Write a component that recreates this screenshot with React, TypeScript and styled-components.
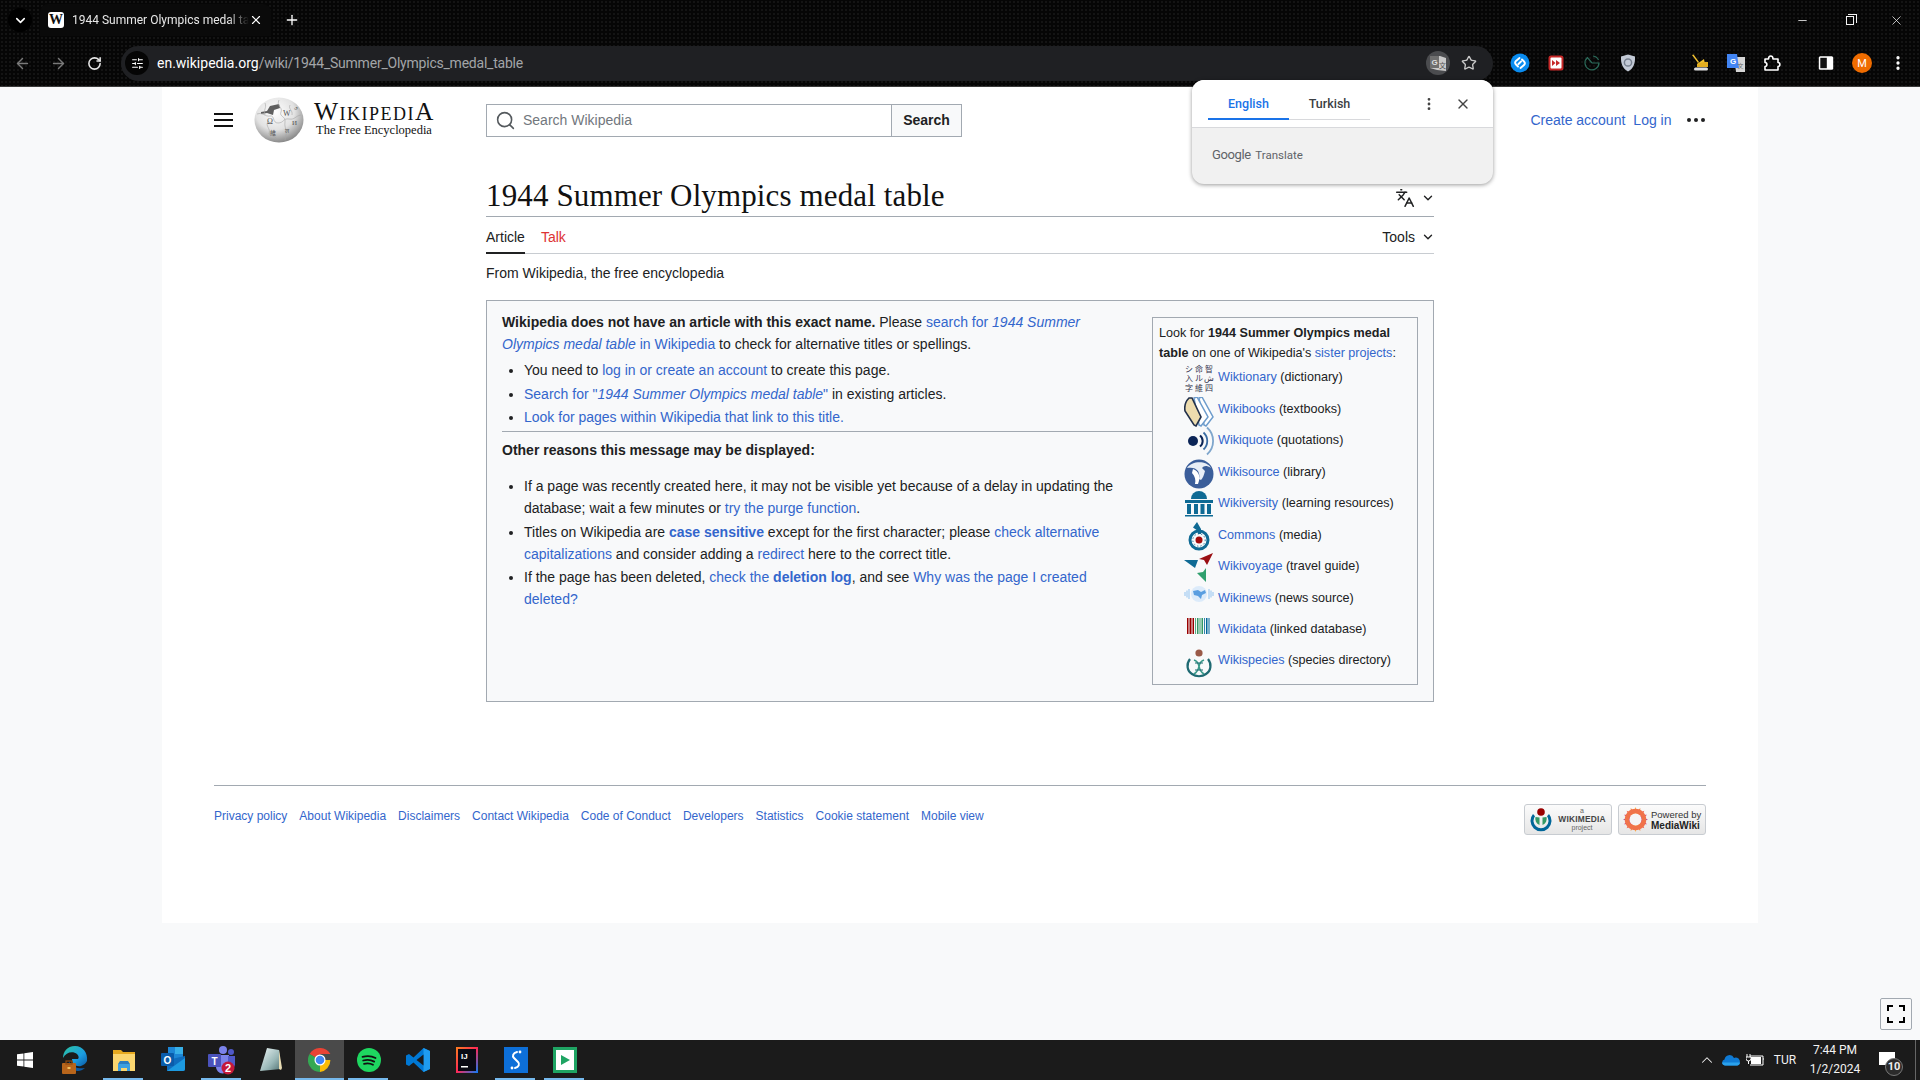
import React from "react";
import styled, { createGlobalStyle } from "styled-components";
import {
  ArrowLeft,
  ArrowRight,
  ChevronDown,
  ChevronUp,
  EllipsisVertical,
  Languages,
  Minus,
  Plus,
  RotateCw,
  Search,
  SlidersHorizontal,
  Star,
  X,
} from "lucide-react";

const GlobalStyle = createGlobalStyle`
  html, body {
    margin: 0;
    padding: 0;
    background: #f8f9fa;
  }
  body {
    font-family: "Liberation Sans", Arial, sans-serif;
    font-size: 14px;
    color: #202122;
  }
  * {
    box-sizing: border-box;
  }
`;

const Frame = styled.div`
  position: relative;
  display: flex;
  flex-direction: column;
  width: 1920px;
  height: 1080px;
  overflow: hidden;
`;

/* browser chrome */

const dotted = `
  background-color: #060606;
  background-image: radial-gradient(#141414 1px, transparent 1px);
  background-size: 4px 4px;
`;

const TabStrip = styled.div`
  ${dotted}
  display: flex;
  align-items: center;
  height: 40px;
  color: #fff;
`;

const TabMenu = styled.div`
  display: flex;
  align-items: center;
  justify-content: center;
  width: 24px;
  height: 24px;
  margin-left: 8px;
  border-radius: 50%;
  background: #000;
`;

const Tab = styled.div`
  display: flex;
  align-items: center;
  width: 231px;
  height: 32px;
  margin: 8px 0 0 8px;
  padding: 0 8px;
  position: relative;
  top: -4px;
  border-radius: 8px 8px 0 0;
  background: #0a0a0a;
`;

const Favicon = styled.div`
  flex: none;
  display: flex;
  align-items: center;
  justify-content: center;
  width: 16px;
  height: 16px;
  border-radius: 3px;
  background: #fff;
  color: #111;
  font: 700 14px "Liberation Serif", serif;
`;

const TabTitle = styled.div`
  flex: 1;
  margin-left: 8px;
  overflow: hidden;
  white-space: nowrap;
  font: 12px Roboto, sans-serif;
  color: #e8e8e8;
  -webkit-mask-image: linear-gradient(90deg, #000 88%, transparent);
  mask-image: linear-gradient(90deg, #000 88%, transparent);
`;

const NewTab = styled.div`
  display: flex;
  margin-left: 13px;
`;

const WindowControls = styled.div`
  display: flex;
  margin-left: auto;
`;

const WindowButton = styled.div`
  display: flex;
  align-items: center;
  justify-content: center;
  width: 47px;
  height: 40px;
  color: #f2f2f2;
`;

const RestoreGlyph = styled.div`
  position: relative;
  width: 8px;
  height: 9px;
  border: 1px solid #f2f2f2;

  &::before {
    content: "";
    position: absolute;
    top: -3px;
    left: 1px;
    width: 8px;
    height: 8px;
    border-top: 1px solid #f2f2f2;
    border-right: 1px solid #f2f2f2;
  }
`;

const Toolbar = styled.div`
  ${dotted}
  display: flex;
  align-items: center;
  height: 47px;
  padding: 0 0 0 4px;
  border-bottom: 1px solid #3a3a3a;
`;

const NavButton = styled.div<{ $dim?: boolean }>`
  display: flex;
  align-items: center;
  justify-content: center;
  width: 36px;
  color: ${(p) => (p.$dim ? "#7a7a7a" : "#e6e6e6")};
`;

const Omnibox = styled.div`
  display: flex;
  align-items: center;
  width: 1372px;
  height: 35px;
  margin-left: 9px;
  padding: 0 16px 0 4px;
  border-radius: 18px;
  background: #1f2023;
`;

const SiteInfo = styled.div`
  display: flex;
  align-items: center;
  justify-content: center;
  width: 24px;
  height: 24px;
  border-radius: 50%;
  background: #050505;
  color: #fff;
`;

const Url = styled.div`
  flex: 1;
  margin-left: 8px;
  font: 14px Roboto, sans-serif;
  letter-spacing: -0.22px;
  color: #a3a5a8;
  white-space: nowrap;

  b {
    font-weight: 400;
    letter-spacing: 0;
    color: #fff;
  }
`;

const TranslateChip = styled.div`
  display: flex;
  align-items: center;
  justify-content: center;
  width: 24px;
  height: 24px;
  margin-right: 11px;
  border-radius: 50%;
  background: #4b4c4f;
`;

const ExtensionRow = styled.div`
  display: flex;
  margin-left: 9px;
`;

const Extension = styled.div<{ $gap?: number }>`
  display: flex;
  align-items: center;
  justify-content: center;
  width: 36px;
  margin-left: ${(p) => p.$gap ?? 0}px;
  color: #fff;
`;

const Avatar = styled.div`
  display: flex;
  align-items: center;
  justify-content: center;
  width: 20px;
  height: 20px;
  border-radius: 50%;
  background: #ef6c00;
  color: #fff;
  font: 11px Roboto, sans-serif;
`;

/* wikipedia page */

const Viewport = styled.div`
  flex: 1;
  background: #f8f9fa;
  padding-left: 162px;
`;

const Sheet = styled.div`
  width: 1596px;
  height: 836px;
  padding: 0 52px;
  background: #fff;
`;

const Header = styled.header`
  display: flex;
  align-items: center;
  height: 66px;
`;

const Hamburger = styled.div`
  flex: none;
  width: 19px;
  height: 14px;
  border-top: 2px solid #111;
  border-bottom: 2px solid #111;
  position: relative;

  &::after {
    content: "";
    position: absolute;
    left: 0;
    right: 0;
    top: 4px;
    height: 2px;
    background: #111;
  }
`;

const Logo = styled.a`
  display: flex;
  align-items: center;
  margin-left: 21px;
  color: #111;
`;

const Wordmark = styled.div`
  width: 122px;
  margin: 0 0 4px 10px;
  font-family: "Liberation Serif", serif;
`;

const WordTitle = styled.div`
  font-size: 25.5px;
  line-height: 23px;
  font-variant: small-caps;
  letter-spacing: 1.5px;
  white-space: nowrap;
`;

const WordTagline = styled.div`
  margin: 1px 0 0 2px;
  font-size: 12.5px;
  line-height: 13px;
  white-space: nowrap;
`;

const SearchBox = styled.form`
  display: flex;
  height: 33px;
  margin: 0 0 0 50px;
`;

const SearchField = styled.div`
  display: flex;
  align-items: center;
  width: 405px;
  padding-left: 8px;
  border: 1px solid #a2a9b1;
  border-right: none;
  color: #72777d;
  font-size: 14px;
  gap: 7px;
`;

const SearchButton = styled.div`
  display: flex;
  align-items: center;
  justify-content: center;
  width: 71px;
  border: 1px solid #a2a9b1;
  font-weight: 700;
  font-size: 14px;
  background: #f8f9fa;
`;

const UserLinks = styled.div`
  display: flex;
  align-items: center;
  margin-left: auto;
  padding-right: 1px;
`;

const HeadLink = styled.a<{ $gap?: number }>`
  color: #3366cc;
  font-size: 14px;
  margin-left: ${(p) => p.$gap ?? 0}px;
`;

const MoreDots = styled.div`
  display: flex;
  gap: 2.5px;
  margin-left: 15px;

  span {
    width: 4.5px;
    height: 4.5px;
    border-radius: 50%;
    background: #202122;
  }
`;

const Main = styled.main`
  width: 948px;
  margin-left: 272px;
`;

const TitleRow = styled.div`
  display: flex;
  align-items: flex-end;
  justify-content: space-between;
  height: 64px;
  padding-bottom: 1px;
  border-bottom: 1px solid #a2a9b1;
`;

const Title = styled.h1`
  margin: 0;
  font: 400 31px/38px "Liberation Serif", serif;
  letter-spacing: 0.13px;
  color: #111;
`;

const LangButton = styled.div`
  display: flex;
  align-items: center;
  gap: 6px;
  margin-right: -1px;
  padding-bottom: 7px;
  color: #202122;
`;

const TabRow = styled.nav`
  display: flex;
  align-items: stretch;
  height: 37px;
  border-bottom: 1px solid #c8ccd1;
`;

const PageTab = styled.a<{ $active?: boolean; $missing?: boolean }>`
  display: flex;
  align-items: center;
  margin-right: 16px;
  margin-bottom: -1px;
  padding-top: 4px;
  font-size: 14px;
  color: ${(p) => (p.$missing ? "#dd3333" : "#202122")};
  border-bottom: 2px solid ${(p) => (p.$active ? "#202122" : "transparent")};
`;

const ToolsMenu = styled.div`
  display: flex;
  align-items: center;
  gap: 6px;
  margin: 0 -1px 0 auto;
  padding-top: 4px;
  font-size: 14px;
`;

const Tagline = styled.div`
  margin-top: 9px;
  height: 20px;
  line-height: 20px;
  font-size: 14px;
`;

const NoticeBox = styled.div`
  display: flex;
  align-items: flex-start;
  height: 402px;
  margin-top: 17px;
  padding: 10px 15px 0 15px;
  border: 1px solid #a2a9b1;
  background: #f8f9fa;
  line-height: 22px;
`;

const NoticeBody = styled.div`
  flex: 1;
  min-width: 0;
`;

const NoticeText = styled.div`
  padding-right: 24px;
`;

const Link = styled.a`
  color: #3366cc;
`;

const BulletList = styled.ul<{ $top: number }>`
  margin: ${(p) => p.$top}px 0 0;
  padding: 0 24px 0 22px;
`;

const Bullet = styled.li`
  margin-bottom: 1.5px;
`;

const Divider = styled.hr`
  height: 1px;
  margin: 3px 0 7px;
  border: none;
  background: #a2a9b1;
`;

const SisterBox = styled.aside`
  flex: none;
  width: 266px;
  height: 368px;
  margin-top: 6px;
  padding: 6px 5px 6px 6px;
  border: 1px solid #a2a9b1;
  font-size: 12.6px;
  line-height: 19.5px;
`;

const SisterRow = styled.div`
  display: flex;
  align-items: center;
  height: 31.45px;
  margin-left: 25px;
  white-space: nowrap;

  &:first-of-type {
    margin-top: -0.5px;
  }
`;

const SisterIcon = styled.div<{ $lift?: number }>`
  flex: none;
  display: flex;
  align-items: center;
  justify-content: center;
  width: 30px;
  height: 30px;
  margin-right: 4px;
  transform: translateY(${(p) => -(p.$lift ?? 0)}px);
`;

const GlyphGrid = styled.div`
  display: grid;
  grid-template-columns: repeat(3, 10px);
  font: 8px/9.5px "Noto Sans CJK SC", sans-serif;
  text-align: center;
  color: #33334d;
`;

const Footer = styled.footer`
  display: flex;
  align-items: flex-start;
  margin-top: 83px;
  padding-top: 18px;
  border-top: 1px solid #a2a9b1;
`;

const FooterLinks = styled.div`
  display: flex;
  gap: 12px;
  margin-top: 3px;
  font-size: 12px;
  line-height: 18px;
`;

const Badges = styled.div`
  display: flex;
  gap: 6px;
  margin-left: auto;
`;

const Badge = styled.div`
  display: flex;
  align-items: center;
  width: 88px;
  height: 31px;
  padding-left: 4px;
  border: 1px solid #c8ccd1;
  border-radius: 3px;
  background: linear-gradient(#fbfbfb, #e6e6e6);
`;

const WikimediaText = styled.div`
  flex: 1;
  text-align: center;
  font: 7px/8px "Liberation Sans", sans-serif;
  color: #666;

  b {
    display: block;
    font-size: 8.4px;
    line-height: 9px;
    letter-spacing: 0.2px;
    color: #444;
  }
`;

const MediaWikiText = styled.div`
  margin-left: 3px;
  font: 9.5px/11px "Liberation Sans", sans-serif;
  color: #333;
  white-space: nowrap;

  b {
    display: block;
    font-size: 10px;
    color: #222;
  }
`;

const ExpandButton = styled.div`
  position: absolute;
  left: 1880px;
  top: 998px;
  display: flex;
  align-items: center;
  justify-content: center;
  width: 32px;
  height: 32px;
  border: 1px solid #a2a9b1;
  border-radius: 2px;
  background: #f8f9fa;
`;

/* translate bubble */

const TranslatePopup = styled.div`
  position: absolute;
  left: 1192px;
  top: 80px;
  width: 301px;
  height: 104px;
  overflow: hidden;
  border-radius: 12px;
  background: #f1f1f1;
  box-shadow: 0 1px 4px rgba(0, 0, 0, 0.4);
`;

const PopupHead = styled.div`
  display: flex;
  align-items: flex-start;
  height: 48px;
  padding: 0 0 0 16px;
  background: #fff;
  border-bottom: 1px solid #d8d9dc;
`;

const LangTab = styled.div<{ $active?: boolean }>`
  display: flex;
  align-items: center;
  justify-content: center;
  width: 81px;
  height: 40px;
  padding-top: 8px;
  font: 500 12.5px Roboto, sans-serif;
  color: ${(p) => (p.$active ? "#1a73e8" : "#3c4043")};
  border-bottom: ${(p) => (p.$active ? "2px solid #1a73e8" : "1px solid #d8d9dc")};
`;

const PopupActions = styled.div`
  display: flex;
  align-items: center;
  gap: 18px;
  height: 40px;
  margin-left: auto;
  padding: 8px 22px 0 0;
  color: #444;
`;

const PopupFooter = styled.div`
  padding: 19px 0 0 20px;
  font: 11.5px Roboto, sans-serif;
  color: #5f6368;

  b {
    font: 13px Roboto, sans-serif;
    letter-spacing: -0.4px;
    margin-right: 2px;
  }
`;

/* windows taskbar */

const Taskbar = styled.div`
  display: flex;
  height: 40px;
  background: #1b1b1b;
  color: #fff;
`;

const TaskSlot = styled.div<{ $active?: boolean; $running?: boolean }>`
  position: relative;
  display: flex;
  align-items: center;
  justify-content: center;
  width: 49px;
  height: 40px;
  background: ${(p) => (p.$active ? "#4a4a4a" : "transparent")};

  &:first-child {
    width: 50px;
  }

  &::after {
    content: "";
    position: absolute;
    bottom: 0;
    left: ${(p) => (p.$active ? 0 : 4)}px;
    right: ${(p) => (p.$active ? 0 : 5)}px;
    height: 2px;
    background: ${(p) => (p.$running ? "#76b9ed" : "transparent")};
  }
`;

const Tray = styled.div`
  display: flex;
  align-items: center;
  margin-left: auto;
`;

const TraySlot = styled.div<{ $width: number }>`
  display: flex;
  align-items: center;
  justify-content: center;
  width: ${(p) => p.$width}px;
  font: 12px Roboto, sans-serif;
  color: #f2f2f2;
`;

const Clock = styled.div`
  width: 64px;
  text-align: center;
  font: 12px/19px Roboto, sans-serif;
  color: #f2f2f2;
`;

const NotifyIcon = styled.div`
  position: relative;
  width: 16px;
  height: 13px;
  margin: -4px 5px 0 0;
  background: #fff;
`;

const NotifyCount = styled.div`
  position: absolute;
  right: -8px;
  bottom: -11px;
  width: 18px;
  height: 18px;
  border: 1px solid #777;
  border-radius: 50%;
  background: #2b2b2b;
  text-align: center;
  font: 700 11px/16px Roboto, sans-serif;
  color: #eee;
`;

const ShowDesktop = styled.div`
  width: 8px;
  height: 40px;
  padding-left: 3px;

  &::before {
    content: "";
    display: block;
    width: 1px;
    height: 40px;
    background: #666;
  }
`;

/* drawings */

const Globe = () => (
  <svg width="50" height="46" viewBox="0 0 50 46">
    <defs>
      <radialGradient id="gl" cx="42%" cy="32%" r="72%">
        <stop offset="0" stopColor="#fff" />
        <stop offset="0.55" stopColor="#e2e2e2" />
        <stop offset="1" stopColor="#7f7f7f" />
      </radialGradient>
    </defs>
    <ellipse cx="25" cy="23" rx="24.5" ry="22.5" fill="url(#gl)" />
    <path d="M7 15l6-1 3-5 9-2 1 4-6 2-1 5-6-2-6 1z" fill="#5f5f5f" />
    <path
      d="M3 17c6-2 8 3 13 2s2 7 8 7 5-5 11-4 6-3 12-4M25 3c-3 6 4 7 2 12s5 4 4 10 3 8 0 18M11 6c2 5-2 7 0 12M14 24c-3 6 3 7 1 13 3 2 7 2 8 6M36 8c-2 4 3 5 2 10"
      fill="none"
      stroke="#a5a5a5"
      strokeWidth="0.6"
    />
    <g fill="#555" fontFamily="Liberation Serif, serif">
      <text x="13" y="27" fontSize="8">Ω</text>
      <text x="29" y="19" fontSize="8">W</text>
      <text x="38" y="28" fontSize="7">И</text>
      <text x="16" y="38" fontSize="6" fontFamily="Noto Sans CJK SC, sans-serif">維</text>
      <text x="40" y="12" fontSize="5">ی</text>
      <text x="31" y="36" fontSize="6">ल</text>
    </g>
  </svg>
);

const TranslateGlyph = () => (
  <svg width="20" height="18" viewBox="0 0 20 18">
    <path d="M2 2h10l6 2v13l-9-1-7-2z" fill="#c9c9c9" />
    <path d="M2 2h9v12H2z" fill="#6f6f6f" />
    <text x="3.500" y="11" fontSize="8" fontWeight="700" fill="#ddd" fontFamily="Liberation Sans, sans-serif">G</text>
    <text x="11" y="13.500" fontSize="7" fill="#555" fontFamily="Noto Sans CJK SC, sans-serif">文</text>
  </svg>
);

const ShazamIcon = () => (
  <svg width="20" height="20" viewBox="0 0 20 20">
    <circle cx="10" cy="10" r="9.5" fill="#0a8cf0" />
    <path d="M8 13.5 6 11.5a2.6 2.6 0 0 1 0-3.6L9.5 5M12 6.5l2 2a2.6 2.6 0 0 1 0 3.6L10.5 15M8.5 11 11 8.5" fill="none" stroke="#fff" strokeWidth="1.9" strokeLinecap="round" />
  </svg>
);

const ForwardBadgeIcon = () => (
  <svg width="16" height="16" viewBox="0 0 16 16">
    <rect x="0.5" y="0.5" width="15" height="15" rx="2.5" fill="#c62828" />
    <rect x="2.5" y="2.5" width="11" height="11" rx="1" fill="#fff" />
    <path d="M4 5v6l3.5-3zM8 5v6l4-3z" fill="#c62828" />
  </svg>
);

const GreenDialIcon = () => (
  <svg width="18" height="18" viewBox="0 0 18 18" fill="none" stroke="#2b6b5a" strokeWidth="1.2">
    <path d="M9 9 4.5 3.5A7 7 0 1 0 16 9H9" />
    <path d="M10 2a7 7 0 0 1 5.5 4" />
  </svg>
);

const ShieldIcon = () => (
  <svg width="16" height="18" viewBox="0 0 16 18">
    <path d="M8 .5 15 2.5c.3 7-1.5 12-7 15-5.5-3-7.3-8-7-15z" fill="#c3cad6" />
    <circle cx="8" cy="8.5" r="3.6" fill="none" stroke="#77808f" strokeWidth="1.5" />
  </svg>
);

const CraneIcon = () => (
  <svg width="18" height="18" viewBox="0 0 18 18">
    <path d="M1 1 7 9l1-1L2.500 .5z" fill="#f2c230" />
    <path d="M6 10l7-5 1 5z" fill="#f2c230" />
    <path d="M13 8h4v5H6v-3z" fill="#e3ad1f" />
    <rect x="3" y="13.500" width="14" height="3" rx="1.500" fill="#ddd" />
  </svg>
);

const GTranslateIcon = () => (
  <svg width="18" height="18" viewBox="0 0 18 18">
    <path d="M7 3h11v15H9z" fill="#d6d6d6" />
    <path d="M0 0h10l2 14H0z" fill="#4285f4" />
    <text x="3" y="10" fontSize="8" fontWeight="700" fill="#fff" fontFamily="Liberation Sans, sans-serif">G</text>
    <text x="10.500" y="14" fontSize="6" fill="#666" fontFamily="Noto Sans CJK SC, sans-serif">文</text>
  </svg>
);

const PuzzleIcon = () => (
  <svg width="18" height="18" viewBox="0 0 18 18" fill="none" stroke="#fff" strokeWidth="1.6" strokeLinejoin="round">
    <path d="M2 5h3.500c0-4 4.500-4 4.500 0H15v3.500c2.500 0 2.500 4 0 4V16H2v-3.500c2.500 0 2.500-4 0-4z" />
  </svg>
);

const SidePanelIcon = () => (
  <svg width="16" height="16" viewBox="0 0 16 16">
    <rect x="0.800" y="1.300" width="14.400" height="13.400" rx="1.500" fill="#fff" />
    <rect x="2.300" y="2.800" width="6.500" height="10.400" fill="#111" />
  </svg>
);

const WiktionaryIcon = () => (
  <GlyphGrid>
    <span>シ</span>
    <span>命</span>
    <span>智</span>
    <span>入</span>
    <span>ル</span>
    <span>ش</span>
    <span>字</span>
    <span>維</span>
    <span>四</span>
  </GlyphGrid>
);

const WikibooksIcon = () => (
  <svg width="30" height="30" viewBox="0 0 30 30">
    <path d="M15 1l3-1 11 20-7 9-2-1z" fill="#fff" stroke="#6d9ccc" strokeWidth="1.500" />
    <path d="M10 1l3-1 11 20-7 9-2-1z" fill="#fff" stroke="#6d9ccc" strokeWidth="1.500" />
    <path d="M5 1 8 1 17 20l-5 9-2-1L1 14C0 8 2 4 5 1z" fill="#eddcae" stroke="#22304a" strokeWidth="1.600" />
  </svg>
);

const WikiquoteIcon = () => (
  <svg width="30" height="30" viewBox="0 0 30 30" fill="none" stroke="#7fa6cc" strokeWidth="1.800">
    <circle cx="9" cy="15" r="5" fill="#0b2456" stroke="none" />
    <path d="M16 9.500a7 7 0 0 1 0 11" stroke="#0b2456" strokeWidth="2" />
    <path d="M19.500 6.500a11.500 11.500 0 0 1 0 17" stroke="#3b6da3" />
    <path d="M23 1.500a18 18 0 0 1 0 27" />
  </svg>
);

const WikisourceIcon = () => (
  <svg width="30" height="30" viewBox="0 0 30 30">
    <circle cx="15" cy="15" r="14.500" fill="#3b5e9a" />
    <path d="M3 9C8 2 22 1 27 9c-5-3-7-2-9 0l3 3c-1 4-2 7-4 9l-2-1c1-3 0-6-1-8C12 9 8 8 3 9z" fill="#e8eef6" />
    <path d="M9 10c3 1 5 3 6 6 1 3 0 6-1 9h-3c1-4 0-8-3-11z" fill="#fff" />
  </svg>
);

const WikiversityIcon = () => (
  <svg width="30" height="30" viewBox="0 0 30 30" fill="#0f6a94">
    <path d="M7 10a8 8 0 0 1 16 0z" />
    <path d="M1 11h28v3H1z" />
    <path d="M3 15h4v10H3zM10 15h4v10h-4zM16.500 15h4v10h-4zM23 15h4v10h-4z" />
    <path d="M1 26h28v1.500H1z" />
  </svg>
);

const CommonsIcon = () => (
  <svg width="30" height="30" viewBox="0 0 30 30">
    <circle cx="15" cy="19" r="9" fill="none" stroke="#0f6a94" strokeWidth="3" />
    <circle cx="15" cy="19" r="3.500" fill="#a30d0d" />
    <path d="M13 1 9 6.500l5 3.500v3h3V8z" fill="#0f6a94" />
    <circle cx="15" cy="19" r="6.200" fill="none" stroke="#0f6a94" strokeWidth="1" strokeDasharray="1.200 2.200" />
  </svg>
);

const WikivoyageIcon = () => (
  <svg width="30" height="30" viewBox="0 0 30 30">
    <path d="M0 8h14l-3 8z" fill="#0f6a94" />
    <path d="M29 1 23 13l-3-5-5-1z" fill="#9a0e12" />
    <path d="M22 30l-9-9 6-1 3-4z" fill="#30a06e" />
  </svg>
);

const WikinewsIcon = () => (
  <svg width="30" height="18" viewBox="0 0 30 18">
    <circle cx="15" cy="9" r="8" fill="#dcebfa" />
    <path d="M9 6l5-1 3 2 4-2 1 3-4 2-1 4-3-3-4-1z" fill="#5a9ee0" />
    <path d="M5 4v10M3 5.500v7M1 7v4M25 4v10M27 5.500v7M29 7v4" stroke="#a3ccf2" strokeWidth="1.200" />
  </svg>
);

const WikidataIcon = () => (
  <svg width="24" height="16" viewBox="0 0 24 16">
    <path d="M0 0h1.500v16H0zM2.500 0h2v16h-2zM5.500 0h1.500v16H5.500z" fill="#990000" />
    <path d="M8 0h.8v16H8zM10 0h1.500v16H10zM12.500 0h1v16h-1zM14.500 0h1.500v16h-1.500z" fill="#339966" />
    <path d="M17 0h.8v16H17zM19 0h1.500v16H19zM21.500 0h1v16h-1z" fill="#006699" />
  </svg>
);

const WikispeciesIcon = () => (
  <svg width="30" height="30" viewBox="0 0 30 30" fill="none">
    <circle cx="15" cy="5" r="3.600" fill="#9a5a48" />
    <path d="M6 11c-4 5-3 12 2 15 4 3 10 3 14 0 5-3 6-10 2-15" stroke="#1f6a72" strokeWidth="2.200" />
    <path d="M10 12c8 3 2 9 10 14M20 12c-8 3-2 9-10 14" stroke="#3a9a8a" strokeWidth="1.600" />
    <path d="M11 15h8M11 22h8" stroke="#1f6a72" strokeWidth="1" />
  </svg>
);

const WikimediaLogo = () => (
  <svg width="24" height="26" viewBox="0 0 24 26">
    <circle cx="12" cy="5" r="3.800" fill="#990000" />
    <path d="M4 7a10.500 10.500 0 1 0 16 0l-2 2.200a7.500 7.500 0 1 1-12 0z" fill="#006699" />
    <path d="M6.500 10a6.500 6.500 0 0 0 4 8V10.500z M17.500 10a6.500 6.500 0 0 1-4 8V10.500z" fill="#339966" />
  </svg>
);

const MediaWikiFlower = () => {
  const colors = ["#fbb040", "#f6863c", "#ef5b4b", "#d0457f", "#a94a9c", "#d0457f", "#ef5b4b", "#f6863c"];
  return (
    <svg width="25" height="25" viewBox="0 0 25 25">
      {Array.from({ length: 16 }).map((_, i) => (
        <path
          key={i}
          d="M12.500 0 15 7H10z"
          fill={colors[i % 8]}
          transform={`rotate(${i * 22.5} 12.500 12.500)`}
        />
      ))}
      <circle cx="12.500" cy="12.500" r="8.500" fill="none" stroke="#f0734a" strokeWidth="4.500" />
      <circle cx="12.500" cy="12.500" r="6" fill="#f5f5f5" />
    </svg>
  );
};

const WindowsLogo = () => (
  <svg width="16" height="16" viewBox="0 0 16 16" fill="#fff">
    <path d="M0 2.300 6.500 1.400v6.200H0zM7.300 1.300 16 0v7.600H7.300zM0 8.400h6.500v6.200L0 13.700zM7.300 8.400H16V16l-8.700-1.300z" />
  </svg>
);

const EdgeLogo = () => (
  <svg width="26" height="30" viewBox="0 0 26 30">
    <defs>
      <linearGradient id="edge" x1="0" y1="0" x2="1" y2="1">
        <stop offset="0" stopColor="#2dc6a0" />
        <stop offset="0.6" stopColor="#1b9de2" />
        <stop offset="1" stopColor="#0c59a4" />
      </linearGradient>
    </defs>
    <path d="M13 1C5 1 1 7 1 13c3-6 10-7 14-4 2 2 2 4 1 5h-6c0 5 4 8 9 7 3-1 5-3 6-5 1-8-4-15-12-15z" fill="url(#edge)" />
    <path d="M7 16c0 6 4 10 9 10 2 0 5-1 7-3-5 1-13 0-16-7z" fill="#0c59a4" />
    <rect x="0" y="18" width="14" height="11" rx="1" fill="#b8651b" />
    <rect x="4" y="16" width="6" height="3" fill="none" stroke="#8f4a10" strokeWidth="1.200" />
    <rect x="5.500" y="22" width="3" height="2" fill="#f0c060" />
  </svg>
);

const FolderLogo = () => (
  <svg width="22" height="22" viewBox="0 0 22 22">
    <path d="M0 1h8l2 2h12v19H0z" fill="#e6a91f" />
    <path d="M0 5h22v17H0z" fill="#fbd66f" />
    <path d="M5 15h12v7h-3v-3H8v3H5z" fill="#3d9fe0" />
    <path d="M7 12h8l2 3H5z" fill="#2b7cc0" />
  </svg>
);

const OutlookLogo = () => (
  <svg width="24" height="26" viewBox="0 0 24 26">
    <path d="M7 0h15v13H7z" fill="#1d86d6" />
    <path d="M14 0h8v7h-8z" fill="#38b0e8" />
    <path d="M6 13l18-4v13a2 2 0 0 1-2 2H6z" fill="#0f6cbd" />
    <path d="M6 24l18-13v11a2 2 0 0 1-2 2z" fill="#1d9ae0" />
    <rect x="0" y="6" width="13" height="13" rx="1" fill="#0a5cab" />
    <text x="6.500" y="16.500" textAnchor="middle" fontSize="10" fontWeight="700" fill="#fff" fontFamily="Liberation Sans, sans-serif">O</text>
  </svg>
);

const TeamsLogo = () => (
  <svg width="28" height="30" viewBox="0 0 28 30">
    <circle cx="15" cy="5" r="4" fill="#7b83eb" />
    <circle cx="23" cy="7" r="3" fill="#5059c9" />
    <path d="M8 10h13v12a6 6 0 0 1-13 0z" fill="#7b83eb" />
    <path d="M20 11h7v9a4 4 0 0 1-7 2z" fill="#5059c9" />
    <rect x="0" y="9" width="13" height="13" rx="1" fill="#4b53bc" />
    <text x="6.500" y="19.500" textAnchor="middle" fontSize="10" fontWeight="700" fill="#fff" fontFamily="Liberation Sans, sans-serif">T</text>
    <circle cx="20" cy="23" r="6.500" fill="#c4193b" />
    <text x="20" y="27" textAnchor="middle" fontSize="11" fontWeight="700" fill="#fff" fontFamily="Liberation Sans, sans-serif">2</text>
  </svg>
);

const NotesLogo = () => (
  <svg width="24" height="26" viewBox="0 0 24 26">
    <defs>
      <linearGradient id="note" x1="0" y1="0" x2="1" y2="1">
        <stop offset="0" stopColor="#eef6f6" />
        <stop offset="0.6" stopColor="#9ab8b8" />
        <stop offset="1" stopColor="#4f6f70" />
      </linearGradient>
    </defs>
    <path d="M8 1 20 3l2 19-21 2z" fill="url(#note)" />
    <path d="M20 3l3 18-1 2-2-1z" fill="#e8dcb4" />
  </svg>
);

const ChromeLogo = () => (
  <svg width="24" height="24" viewBox="0 0 24 24">
    <path d="M12 12 1.600 6A12 12 0 0 1 22.400 6H12z" fill="#ea4335" />
    <path d="M12 12H22.400A12 12 0 0 1 12 24z" fill="#fbbc04" />
    <path d="M12 12V24A12 12 0 0 1 1.600 6z" fill="#34a853" />
    <circle cx="12" cy="12" r="5.500" fill="#fff" />
    <circle cx="12" cy="12" r="4.300" fill="#4285f4" />
  </svg>
);

const SpotifyLogo = () => (
  <svg width="24" height="24" viewBox="0 0 24 24" fill="none">
    <circle cx="12" cy="12" r="12" fill="#1ed760" />
    <path d="M5.500 8.800c4.500-1.200 9.500-.8 13 1.200M6.200 12.500c4-1 8-.6 11 1.100M7 15.800c3.200-.8 6.500-.5 9 1" stroke="#111" strokeWidth="1.800" strokeLinecap="round" />
  </svg>
);

const VscodeLogo = () => (
  <svg width="24" height="24" viewBox="0 0 24 24">
    <path d="M17.500 0 24 3v18l-6.500 3-10-9.500L3 18l-3-1.500v-9L3 6l4.500 3.500z" fill="#0078d4" />
    <path d="M17.500 0 24 3v18l-6.500 3z" fill="#1f9cf0" />
    <path d="M17.500 6.500 10.500 12l7 5.500z" fill="#1b1b1b" />
  </svg>
);

const IntellijLogo = () => (
  <svg width="22" height="26" viewBox="0 0 22 26">
    <defs>
      <linearGradient id="ij" x1="0" y1="0" x2="1" y2="1">
        <stop offset="0" stopColor="#fc801d" />
        <stop offset="0.5" stopColor="#fe2857" />
        <stop offset="1" stopColor="#087cfa" />
      </linearGradient>
    </defs>
    <rect width="22" height="26" fill="url(#ij)" />
    <rect x="2" y="2" width="18" height="22" fill="#0a0a14" />
    <text x="5" y="12" fontSize="8" fontWeight="700" fill="#fff" fontFamily="Liberation Sans, sans-serif">IJ</text>
    <rect x="5" y="19" width="7" height="1.500" fill="#fff" />
  </svg>
);

const SimpleLogo = () => (
  <svg width="24" height="26" viewBox="0 0 24 26">
    <rect width="24" height="26" fill="#0d6fd8" />
    <path d="M13 5c-4 1-5 4-3 6l4 4c2 2 1 5-3 6" fill="none" stroke="#fff" strokeWidth="2" strokeLinecap="round" />
    <circle cx="16" cy="5" r="1.400" fill="#fff" />
    <circle cx="8" cy="21" r="1.400" fill="#fff" />
  </svg>
);

const PlayLogo = () => (
  <svg width="24" height="26" viewBox="0 0 24 26">
    <rect width="24" height="26" fill="#1fa463" />
    <rect x="3" y="3" width="18" height="20" fill="#fff" />
    <path d="M8 8v10l9-5z" fill="#1fa463" />
  </svg>
);

const CloudIcon = () => (
  <svg width="18" height="12" viewBox="0 0 18 12">
    <path d="M3 11.500a3 3 0 0 1-.5-5.900A5 5 0 0 1 12 4a3.800 3.800 0 0 1 3.500 7.500z" fill="#0f7ad4" />
    <path d="M3 11.500c-1 0-3-1-3-3h18c0 2-1.500 3-3 3z" fill="#2aa1ec" />
  </svg>
);

const PowerIcon = () => (
  <svg width="18" height="14" viewBox="0 0 18 14" fill="none" stroke="#fff">
    <path d="M4 3h13v9H4M17 6h1" strokeWidth="1" />
    <rect x="5" y="4" width="10" height="7" fill="#fff" stroke="none" />
    <path d="M1 1v3M4 1v3M0 4h5v1.500a2.500 2.500 0 0 1-5 0zM2.500 8v3" strokeWidth="1" />
  </svg>
);

const ExpandIcon = () => (
  <svg width="18" height="18" viewBox="0 0 18 18" fill="none" stroke="#000" strokeWidth="2">
    <path d="M1 6V1h5M12 1h5v5M17 12v5h-5M6 17H1v-5" />
  </svg>
);

const sisters: [string, string, React.ReactNode, number][] = [
  ["Wiktionary", "dictionary", <WiktionaryIcon />, 0],
  ["Wikibooks", "textbooks", <WikibooksIcon />, -2],
  ["Wikiquote", "quotations", <WikiquoteIcon />, 0],
  ["Wikisource", "library", <WikisourceIcon />, -1],
  ["Wikiversity", "learning resources", <WikiversityIcon />, 0],
  ["Commons", "media", <CommonsIcon />, -1],
  ["Wikivoyage", "travel guide", <WikivoyageIcon />, 0],
  ["Wikinews", "news source", <WikinewsIcon />, 4],
  ["Wikidata", "linked database", <WikidataIcon />, 4],
  ["Wikispecies", "species directory", <WikispeciesIcon />, -2],
];

const footerLinks = [
  "Privacy policy",
  "About Wikipedia",
  "Disclaimers",
  "Contact Wikipedia",
  "Code of Conduct",
  "Developers",
  "Statistics",
  "Cookie statement",
  "Mobile view",
];

const App = () => {
  return (
    <Frame>
      <GlobalStyle />
      <TabStrip>
        <TabMenu>
          <ChevronDown size={15} strokeWidth={2.5} />
        </TabMenu>
        <Tab>
          <Favicon>W</Favicon>
          <TabTitle>1944 Summer Olympics medal table</TabTitle>
          <X size={14} strokeWidth={2} />
        </Tab>
        <NewTab>
          <Plus size={16} strokeWidth={2} />
        </NewTab>
        <WindowControls>
          <WindowButton>
            <Minus size={13} strokeWidth={1.5} />
          </WindowButton>
          <WindowButton>
            <RestoreGlyph />
          </WindowButton>
          <WindowButton>
            <X size={15} strokeWidth={1.2} />
          </WindowButton>
        </WindowControls>
      </TabStrip>

      <Toolbar>
        <NavButton $dim>
          <ArrowLeft size={17} />
        </NavButton>
        <NavButton $dim>
          <ArrowRight size={17} />
        </NavButton>
        <NavButton>
          <RotateCw size={15} strokeWidth={2.5} />
        </NavButton>
        <Omnibox>
          <SiteInfo>
            <SlidersHorizontal size={13} />
          </SiteInfo>
          <Url>
            <b>en.wikipedia.org</b>/wiki/1944_Summer_Olympics_medal_table
          </Url>
          <TranslateChip>
            <TranslateGlyph />
          </TranslateChip>
          <Star size={16} color="#c9c9c9" strokeWidth={2} />
        </Omnibox>
        <ExtensionRow>
          <Extension>
            <ShazamIcon />
          </Extension>
          <Extension>
            <ForwardBadgeIcon />
          </Extension>
          <Extension>
            <GreenDialIcon />
          </Extension>
          <Extension>
            <ShieldIcon />
          </Extension>
          <Extension />
          <Extension>
            <CraneIcon />
          </Extension>
          <Extension>
            <GTranslateIcon />
          </Extension>
          <Extension>
            <PuzzleIcon />
          </Extension>
          <Extension $gap={18}>
            <SidePanelIcon />
          </Extension>
          <Extension>
            <Avatar>M</Avatar>
          </Extension>
          <Extension>
            <EllipsisVertical size={18} strokeWidth={2.4} />
          </Extension>
        </ExtensionRow>
      </Toolbar>

      <Viewport>
        <Sheet>
          <Header>
            <Hamburger />
            <Logo>
              <Globe />
              <Wordmark>
                <WordTitle>WikipediA</WordTitle>
                <WordTagline>The Free Encyclopedia</WordTagline>
              </Wordmark>
            </Logo>
            <SearchBox>
              <SearchField>
                <Search size={21} strokeWidth={1.8} color="#54595d" />
                Search Wikipedia
              </SearchField>
              <SearchButton>Search</SearchButton>
            </SearchBox>
            <UserLinks>
              <HeadLink>Create account</HeadLink>
              <HeadLink $gap={8}>Log in</HeadLink>
              <MoreDots>
                <span />
                <span />
                <span />
              </MoreDots>
            </UserLinks>
          </Header>

          <Main>
            <TitleRow>
              <Title>1944 Summer Olympics medal table</Title>
              <LangButton>
                <Languages size={20} strokeWidth={1.8} />
                <ChevronDown size={14} strokeWidth={2.4} />
              </LangButton>
            </TitleRow>
            <TabRow>
              <PageTab $active>Article</PageTab>
              <PageTab $missing>Talk</PageTab>
              <ToolsMenu>
                Tools
                <ChevronDown size={14} strokeWidth={2.4} />
              </ToolsMenu>
            </TabRow>
            <Tagline>From Wikipedia, the free encyclopedia</Tagline>

            <NoticeBox>
              <NoticeBody>
                <NoticeText>
                  <b>Wikipedia does not have an article with this exact name.</b> Please{" "}
                  <Link>
                    search for <i>1944 Summer Olympics medal table</i> in Wikipedia
                  </Link>{" "}
                  to check for alternative titles or spellings.
                </NoticeText>
                <BulletList $top={4}>
                  <Bullet>
                    You need to <Link>log in or create an account</Link> to create this page.
                  </Bullet>
                  <Bullet>
                    <Link>
                      Search for "<i>1944 Summer Olympics medal table</i>"
                    </Link>{" "}
                    in existing articles.
                  </Bullet>
                  <Bullet>
                    <Link>Look for pages within Wikipedia that link to this title.</Link>
                  </Bullet>
                </BulletList>
                <Divider />
                <b>Other reasons this message may be displayed:</b>
                <BulletList $top={14}>
                  <Bullet>
                    If a page was recently created here, it may not be visible yet because of a delay in updating the
                    database; wait a few minutes or <Link>try the purge function</Link>.
                  </Bullet>
                  <Bullet>
                    Titles on Wikipedia are{" "}
                    <Link>
                      <b>case sensitive</b>
                    </Link>{" "}
                    except for the first character; please <Link>check alternative capitalizations</Link> and consider
                    adding a <Link>redirect</Link> here to the correct title.
                  </Bullet>
                  <Bullet>
                    If the page has been deleted,{" "}
                    <Link>
                      check the <b>deletion log</b>
                    </Link>
                    , and see <Link>Why was the page I created deleted?</Link>
                  </Bullet>
                </BulletList>
              </NoticeBody>

              <SisterBox>
                Look for <b>1944 Summer Olympics medal table</b> on one of Wikipedia's <Link>sister projects</Link>:
                {sisters.map(([name, kind, icon, lift]) => (
                  <SisterRow key={name}>
                    <SisterIcon $lift={lift}>{icon}</SisterIcon>
                    <span>
                      <Link>{name}</Link> ({kind})
                    </span>
                  </SisterRow>
                ))}
              </SisterBox>
            </NoticeBox>
          </Main>

          <Footer>
            <FooterLinks>
              {footerLinks.map((label) => (
                <Link key={label}>{label}</Link>
              ))}
            </FooterLinks>
            <Badges>
              <Badge>
                <WikimediaLogo />
                <WikimediaText>
                  a
                  <b>WIKIMEDIA</b>
                  project
                </WikimediaText>
              </Badge>
              <Badge>
                <MediaWikiFlower />
                <MediaWikiText>
                  Powered by
                  <b>MediaWiki</b>
                </MediaWikiText>
              </Badge>
            </Badges>
          </Footer>
        </Sheet>
      </Viewport>

      <Taskbar>
        <TaskSlot>
          <WindowsLogo />
        </TaskSlot>
        <TaskSlot>
          <EdgeLogo />
        </TaskSlot>
        <TaskSlot $running>
          <FolderLogo />
        </TaskSlot>
        <TaskSlot>
          <OutlookLogo />
        </TaskSlot>
        <TaskSlot $running>
          <TeamsLogo />
        </TaskSlot>
        <TaskSlot>
          <NotesLogo />
        </TaskSlot>
        <TaskSlot $active $running>
          <ChromeLogo />
        </TaskSlot>
        <TaskSlot $running>
          <SpotifyLogo />
        </TaskSlot>
        <TaskSlot>
          <VscodeLogo />
        </TaskSlot>
        <TaskSlot>
          <IntellijLogo />
        </TaskSlot>
        <TaskSlot $running>
          <SimpleLogo />
        </TaskSlot>
        <TaskSlot $running>
          <PlayLogo />
        </TaskSlot>
        <Tray>
          <TraySlot $width={24}>
            <ChevronUp size={18} strokeWidth={1.4} />
          </TraySlot>
          <TraySlot $width={24}>
            <CloudIcon />
          </TraySlot>
          <TraySlot $width={24}>
            <PowerIcon />
          </TraySlot>
          <TraySlot $width={36}>TUR</TraySlot>
          <Clock>
            7:44 PM
            <br />
            1/2/2024
          </Clock>
          <TraySlot $width={45}>
            <NotifyIcon>
              <NotifyCount>10</NotifyCount>
            </NotifyIcon>
          </TraySlot>
          <ShowDesktop />
        </Tray>
      </Taskbar>

      <ExpandButton>
        <ExpandIcon />
      </ExpandButton>

      <TranslatePopup>
        <PopupHead>
          <LangTab $active>English</LangTab>
          <LangTab>Turkish</LangTab>
          <PopupActions>
            <EllipsisVertical size={16} strokeWidth={2.2} />
            <X size={16} strokeWidth={2} />
          </PopupActions>
        </PopupHead>
        <PopupFooter>
          <b>Google</b> Translate
        </PopupFooter>
      </TranslatePopup>
    </Frame>
  );
};

export default App;
